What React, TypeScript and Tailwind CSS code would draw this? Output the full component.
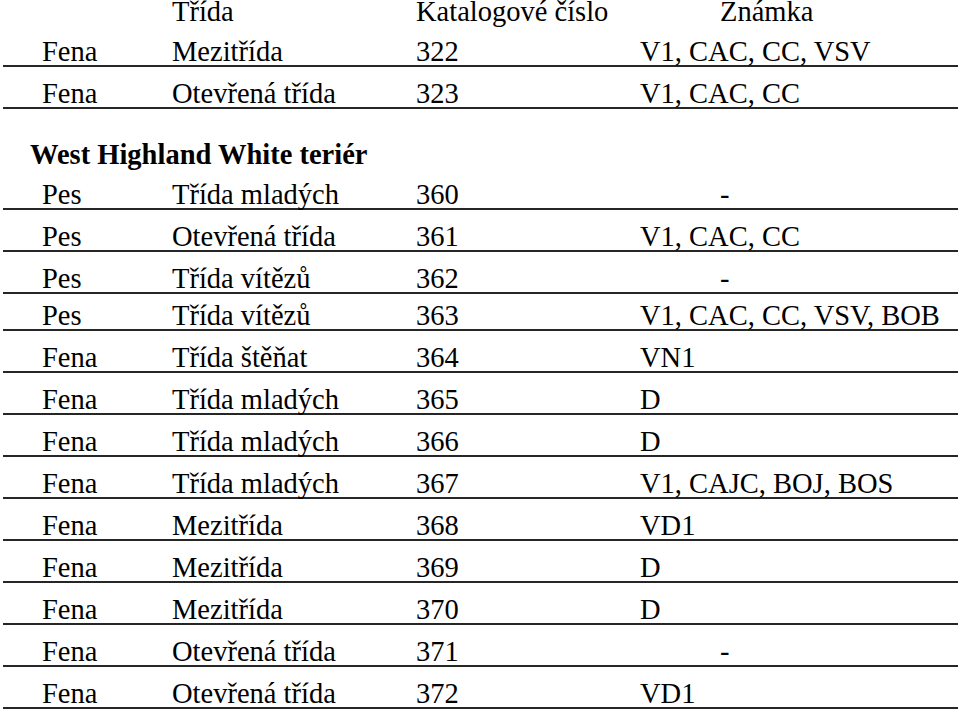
type Row = {
  sex: string;
  cls: string;
  num: string;
  grade: string;
  short?: boolean;
};

const firstGroup: Row[] = [
  { sex: "Fena", cls: "Mezitřída", num: "322", grade: "V1, CAC, CC, VSV" },
  { sex: "Fena", cls: "Otevřená třída", num: "323", grade: "V1, CAC, CC" },
];

const westie: Row[] = [
  { sex: "Pes", cls: "Třída mladých", num: "360", grade: "-" },
  { sex: "Pes", cls: "Otevřená třída", num: "361", grade: "V1, CAC, CC" },
  { sex: "Pes", cls: "Třída vítězů", num: "362", grade: "-" },
  { sex: "Pes", cls: "Třída vítězů", num: "363", grade: "V1, CAC, CC, VSV, BOB", short: true },
  { sex: "Fena", cls: "Třída štěňat", num: "364", grade: "VN1" },
  { sex: "Fena", cls: "Třída mladých", num: "365", grade: "D" },
  { sex: "Fena", cls: "Třída mladých", num: "366", grade: "D" },
  { sex: "Fena", cls: "Třída mladých", num: "367", grade: "V1, CAJC, BOJ, BOS" },
  { sex: "Fena", cls: "Mezitřída", num: "368", grade: "VD1" },
  { sex: "Fena", cls: "Mezitřída", num: "369", grade: "D" },
  { sex: "Fena", cls: "Mezitřída", num: "370", grade: "D" },
  { sex: "Fena", cls: "Otevřená třída", num: "371", grade: "-" },
  { sex: "Fena", cls: "Otevřená třída", num: "372", grade: "VD1" },
];

function ResultRow({ row }: { row: Row }) {
  const dash = row.grade === "-";
  return (
    <div
      className={
        row.short
          ? "flex h-[37px] items-end border-b-2 border-[#262626] whitespace-nowrap"
          : "flex h-[42px] items-end border-b-2 border-[#262626] whitespace-nowrap"
      }
    >
      <span className="w-[169px] shrink-0 pl-[39px]">{row.sex}</span>
      <span className="w-[244px] shrink-0">{row.cls}</span>
      <span className="w-[224px] shrink-0">{row.num}</span>
      <span className={dash ? "pl-[80px]" : ""}>{row.grade}</span>
    </div>
  );
}

export default function App() {
  return (
    <div className="h-[714px] w-[960px] overflow-hidden bg-white text-black">
      <div className="ml-[3px] mr-[2px] font-['Liberation_Serif',_'Times_New_Roman',_serif] text-[28.5px] leading-[26px]">
        <div className="flex h-[25px] items-end pb-[3px] leading-[20px] whitespace-nowrap">
          <span className="w-[169px] shrink-0" />
          <span className="w-[244px] shrink-0">Třída</span>
          <span className="w-[304px] shrink-0">Katalogové číslo</span>
          <span>Známka</span>
        </div>

        {firstGroup.map((row) => (
          <ResultRow key={row.num} row={row} />
        ))}

        <div className="flex h-[59px] items-end pl-[27px] font-bold whitespace-nowrap">
          West Highland White teriér
        </div>

        {westie.map((row) => (
          <ResultRow key={row.num} row={row} />
        ))}
      </div>
    </div>
  );
}
